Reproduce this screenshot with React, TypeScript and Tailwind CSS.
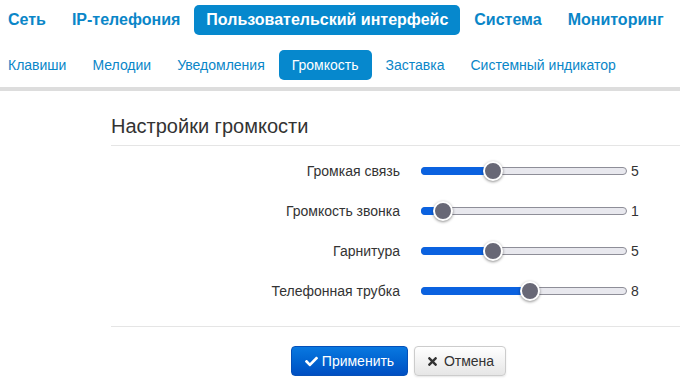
import React from "react";
import { FaCheck, FaTimes } from "react-icons/fa";

const top = [
  { t: "Сеть" },
  { t: "IP-телефония" },
  { t: "Пользовательский интерфейс", a: true },
  { t: "Система" },
  { t: "Мониторинг" },
];

const sub = [
  { t: "Клавиши" },
  { t: "Мелодии" },
  { t: "Уведомления" },
  { t: "Громкость", a: true },
  { t: "Заставка" },
  { t: "Системный индикатор" },
];

const rows = [
  { label: "Громкая связь", v: 5 },
  { label: "Громкость звонка", v: 1 },
  { label: "Гарнитура", v: 5 },
  { label: "Телефонная трубка", v: 8 },
];

function Slider({ value }: { value: number }) {
  const pos = 9 + (188 * value) / 15;
  return (
    <div className="relative w-[206px] h-[22px]">
      <div className="absolute left-0 right-0 top-[7px] h-[8px] rounded-full bg-[#e8e8ee] border border-[#8e8e98]" />
      <div
        className="absolute left-0 top-[7px] h-[8px] rounded-full bg-[#0b62e0]"
        style={{ width: pos }}
      />
      <div
        className="absolute top-[1px] w-[20px] h-[20px] -ml-[10px] rounded-full bg-[#686876] border-2 border-white shadow-[0_1px_3px_rgba(0,0,0,0.45)]"
        style={{ left: pos }}
      />
    </div>
  );
}

export default function App() {
  return (
    <div className="w-[680px] h-[387px] overflow-hidden bg-white font-['Liberation_Sans',Arial,sans-serif] text-[#333]">
      <div className="flex pt-[5px] -ml-[4px] gap-[2px] whitespace-nowrap">
        {top.map((i) => (
          <div
            key={i.t}
            className={
              i.a
                ? "shrink-0 h-[30px] px-[12px] flex items-center text-[16px] font-bold rounded-[5px] bg-[#0688cd] text-white"
                : "shrink-0 h-[30px] px-[12px] flex items-center text-[16px] font-bold rounded-[5px] text-[#0a86c8]"
            }
          >
            {i.t}
          </div>
        ))}
      </div>
      <div className="flex mt-[15px] -ml-1 gap-[2px] whitespace-nowrap">
        {sub.map((i) => (
          <div
            key={i.t}
            className={
              i.a
                ? "shrink-0 h-[30px] px-[13px] flex items-center text-[14px] rounded-[5px] bg-[#0688cd] text-white"
                : "shrink-0 h-[30px] px-3 flex items-center text-[14px] rounded-[5px] text-[#0a86c8]"
            }
          >
            {i.t}
          </div>
        ))}
      </div>
      <div className="mt-[7px] h-[4px] bg-[#dddddd]" />
      <div className="ml-[111px]">
        <div className="mt-[15px] h-[40px] pt-[2px] leading-[37px] text-[20px] text-[#333] border-b border-[#e5e5e5]">
          Настройки громкости
        </div>
        <div className="pt-[5px] pb-[15px] border-b border-[#e5e5e5]">
          {rows.map((r) => (
            <div key={r.label} className="h-[40px] flex items-center">
              <div className="w-[289px] text-right text-[14px] text-[#333]">{r.label}</div>
              <div className="ml-[21px]">
                <Slider value={r.v} />
              </div>
              <div className="ml-[4px] text-[14px] text-[#333]">{r.v}</div>
            </div>
          ))}
        </div>
        <div className="pt-[19px] pl-[180px] flex gap-[6px]">
          <button className="h-[30px] w-[117px] flex items-center justify-center gap-[4px] rounded-[4px] border border-[#0550b8] bg-gradient-to-b from-[#0a78e0] to-[#004fc2] text-white text-[14px]">
            <FaCheck className="w-[13px] h-[13px]" />
            <span>Применить</span>
          </button>
          <button className="h-[30px] w-[92px] flex items-center justify-center gap-[5px] rounded-[4px] border border-[#cccccc] bg-gradient-to-b from-white to-[#e6e6e6] text-[#333] text-[14px] shadow-[0_1px_2px_rgba(0,0,0,0.1)]">
            <FaTimes className="w-[13px] h-[13px]" />
            <span>Отмена</span>
          </button>
        </div>
      </div>
    </div>
  );
}
